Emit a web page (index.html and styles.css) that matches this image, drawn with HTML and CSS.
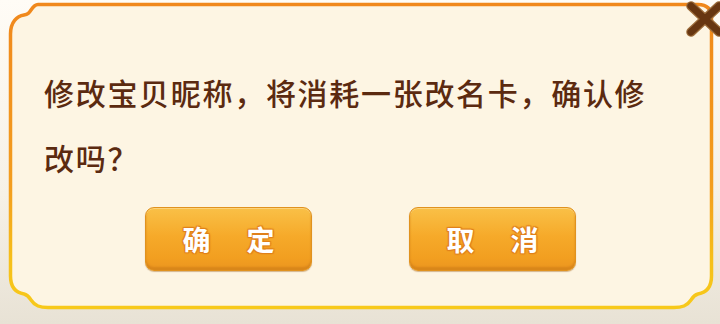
FILE: index.html
```html
<!DOCTYPE html>
<html lang="zh-CN">
<head>
	<meta charset="UTF-8">
	<title>修改昵称</title>
	<link rel="stylesheet" href="styles.css">
</head>
<body>
<div class="dialog">
	<p class="msg">修改宝贝昵称，将消耗一张改名卡，确认修改吗？</p>
	<div class="btns">
		<a href="javascript:" class="btn"><span>确</span><span>定</span></a>
		<a href="javascript:" class="btn"><span>取</span><span>消</span></a>
	</div>
	<a href="javascript:" class="close">
		<svg width="42" height="38" viewBox="0 0 42 38">
			<path d="M7 6 L35 32 M35 6 L7 32" stroke="#9a6a38" stroke-width="9.5" stroke-linecap="round"/>
			<path d="M7 6 L35 32 M35 6 L7 32" stroke="#673611" stroke-width="7" stroke-linecap="round"/>
		</svg>
	</a>
</div>
</body>
</html>
```

FILE: styles.css
```css
html, body {
	margin: 0;
	padding: 0;
}
body {
	width: 720px;
	height: 324px;
	overflow: hidden;
	background: linear-gradient(#fffcf6, #f6f1e7 60%, #e8e2d5);
	font-family: "Noto Sans CJK SC", "Noto Sans", sans-serif;
}
.dialog {
	position: relative;
	box-sizing: border-box;
	width: 706px;
	height: 308px;
	margin: 2px 0 0 8px;
	padding: 58px 0 0 36px;
	background: url("data:image/svg+xml,%3Csvg xmlns='http://www.w3.org/2000/svg' width='706' height='308' viewBox='0 0 706 308'%3E%3Cdefs%3E%3ClinearGradient id='g' x1='0' y1='0' x2='0' y2='1'%3E%3Cstop offset='0' stop-color='%23f0881c'/%3E%3Cstop offset='0.6' stop-color='%23f39d1e'/%3E%3Cstop offset='0.85' stop-color='%23f6c01a'/%3E%3Cstop offset='1' stop-color='%23f7c91b'/%3E%3C/linearGradient%3E%3C/defs%3E%3Cpath d='M30 2.5 H690 Q703.5 2.5 703.5 16 V274 C703.5 287 696 291 690 292 C686 293 685 295 683 298 C679 304 674 305.5 666 305.5 H40 C32 305.5 27 304 23 298 C21 295 20 293 16 292 C10 291 2.5 287 2.5 274 V32 C2.5 20 9 14 16 13 C20 12.5 21 11 23 8 C26 3.5 28 2.5 30 2.5 Z' fill='%23fdf5e3' stroke='url(%23g)' stroke-width='3.5'/%3E%3C/svg%3E") no-repeat;
}
.msg {
	width: 625px;
	margin: 0;
	font-size: 30px;
	font-weight: 500;
	line-height: 65px;
	letter-spacing: 1.7px;
	color: #5b2a10;
}
.btns {
	display: flex;
	gap: 97px;
	margin: 17px 0 0 101px;
}
.btn {
	display: flex;
	justify-content: center;
	align-items: center;
	gap: 36px;
	box-sizing: border-box;
	width: 167px;
	height: 64px;
	border: 1px solid #e0921f;
	border-radius: 9px;
	background: linear-gradient(#f9c047, #f6aa2a 45%, #f29f20 80%, #ec9520);
	box-shadow: inset 0 1px 0 #fcd27a, inset 0 -3px 2px #d9861a, 0 1px 1px rgba(160, 100, 30, 0.45);
	text-decoration: none;
	font-size: 28px;
	font-weight: bold;
	color: #fff;
	text-shadow: 0 0 2px #e0801c, 1px 1px 1px #e0801c, -1px -1px 1px #e0801c, 1px -1px 1px #e0801c, -1px 1px 1px #e0801c;
}
.close {
	position: absolute;
	top: -2px;
	right: -12px;
	display: block;
	width: 42px;
	height: 38px;
}
.close svg {
	display: block;
}
```
